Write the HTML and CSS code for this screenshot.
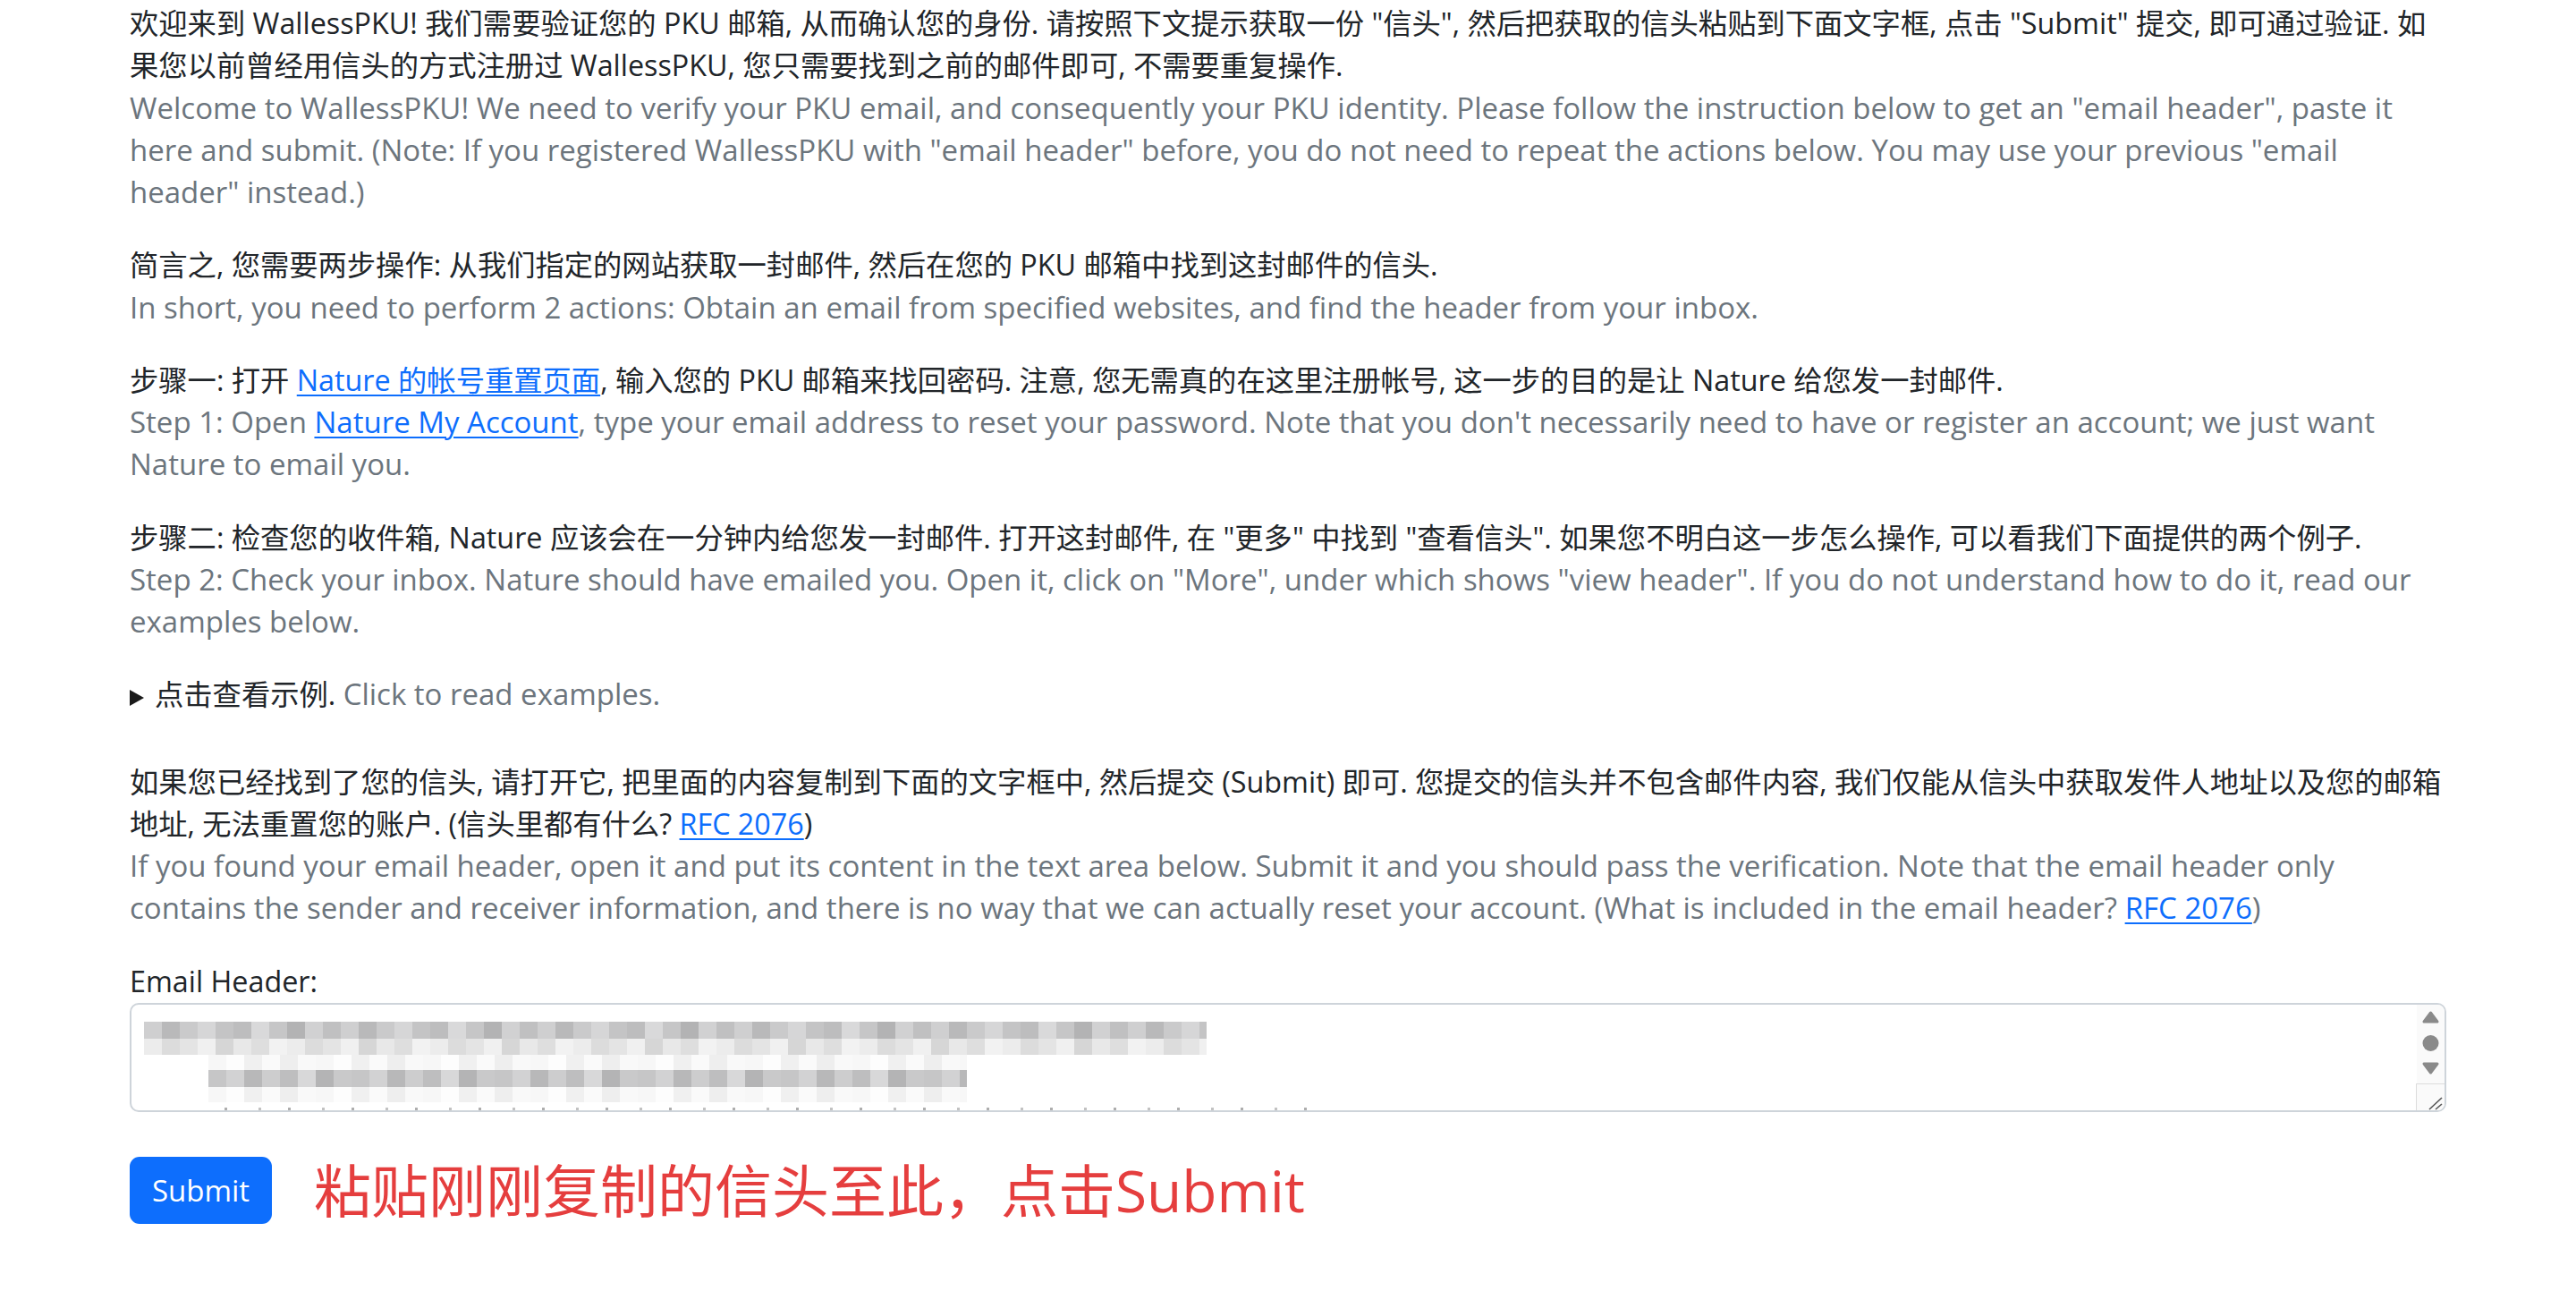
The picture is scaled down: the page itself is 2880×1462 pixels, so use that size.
FILE: index.html
```html
<!DOCTYPE html>
<html lang="zh-CN">
<head>
<meta charset="utf-8">
<title>WallessPKU - Email Header</title>
<link rel="stylesheet" href="styles.css">
</head>
<body>
<main class="page">
  <p class="para">欢迎来到 WallessPKU! 我们需要验证您的 PKU 邮箱, 从而确认您的身份. 请按照下文提示获取一份 "信头", 然后把获取的信头粘贴到下面文字框, 点击 "Submit" 提交, 即可通过验证. 如果您以前曾经用信头的方式注册过 WallessPKU, 您只需要找到之前的邮件即可, 不需要重复操作.<br><span class="muted">Welcome to WallessPKU! We need to verify your PKU email, and consequently your PKU identity. Please follow the instruction below to get an "email header", paste it here and submit. (Note: If you registered WallessPKU with "email header" before, you do not need to repeat the actions below. You may use your previous "email header" instead.)</span></p>

  <p class="para">简言之, 您需要两步操作: 从我们指定的网站获取一封邮件, 然后在您的 PKU 邮箱中找到这封邮件的信头.<br><span class="muted">In short, you need to perform 2 actions: Obtain an email from specified websites, and find the header from your inbox.</span></p>

  <p class="para">步骤一: 打开 <a class="link" href="#">Nature 的帐号重置页面</a>, 输入您的 PKU 邮箱来找回密码. 注意, 您无需真的在这里注册帐号, 这一步的目的是让 Nature 给您发一封邮件.<br><span class="muted">Step 1: Open <a class="link" href="#">Nature My Account</a>, type your email address to reset your password. Note that you don't necessarily need to have or register an account; we just want Nature to email you.</span></p>

  <p class="para">步骤二: 检查您的收件箱, Nature 应该会在一分钟内给您发一封邮件. 打开这封邮件, 在 "更多" 中找到 "查看信头". 如果您不明白这一步怎么操作, 可以看我们下面提供的两个例子.<br><span class="muted">Step 2: Check your inbox. Nature should have emailed you. Open it, click on "More", under which shows "view header". If you do not understand how to do it, read our examples below.</span></p>

  <details class="examples">
    <summary class="summary">点击查看示例. <span class="muted">Click to read examples.</span></summary>
  </details>

  <p class="para">如果您已经找到了您的信头, 请打开它, 把里面的内容复制到下面的文字框中, 然后提交 (Submit) 即可. 您提交的信头并不包含邮件内容, 我们仅能从信头中获取发件人地址以及您的邮箱地址, 无法重置您的账户. (信头里都有什么? <a class="link" href="#">RFC 2076</a>)<br><span class="muted">If you found your email header, open it and put its content in the text area below. Submit it and you should pass the verification. Note that the email header only contains the sender and receiver information, and there is no way that we can actually reset your account. (What is included in the email header? <a class="link" href="#">RFC 2076</a>)</span></p>

  <form class="form">
    <label class="label">Email Header:</label>
    <div class="textarea">
      <div class="mosaic">
        <div class="row1"><div class="band band-dark"></div><div class="band band-mid"></div></div>
        <div class="row2"><div class="band band-faint"></div><div class="band band-dark2"></div><div class="band band-faint"></div></div>
        <div class="row3"></div>
      </div>
      <div class="scrollbar">
        <svg class="sb-svg" width="31" height="118" viewBox="0 0 31 118">
          <polygon points="15.5,9 23,19 8,19" fill="#8a8a8a" stroke="#8a8a8a" stroke-width="3" stroke-linejoin="round"/>
          <circle cx="15.5" cy="43" r="9" fill="#8a8a8a"/>
          <polygon points="8,66 23,66 15.5,76" fill="#8a8a8a" stroke="#8a8a8a" stroke-width="3" stroke-linejoin="round"/>
        </svg>
        <div class="resizer">
          <svg width="31" height="30" viewBox="0 0 31 30">
            <line x1="14" y1="28" x2="28" y2="15" stroke="#555" stroke-width="1.6"/>
            <line x1="21" y1="28" x2="28" y2="22" stroke="#555" stroke-width="1.6"/>
          </svg>
        </div>
      </div>
    </div>
    <div class="actions">
      <button class="btn" type="button">Submit</button>
      <span class="hint">粘贴刚刚复制的信头至此，点击Submit</span>
    </div>
  </form>
</main>
</body>
</html>
```

FILE: styles.css
```css
html, body {
  margin: 0;
  padding: 0;
  background: #ffffff;
}

body {
  font-family: "Open Sans", "Noto Sans CJK SC", sans-serif;
  font-size: 32.3px;
  line-height: 47.25px;
  color: #212529;
}

.page {
  width: 2590px;
  padding: 2px 0 0 145px;
}

.para {
  margin: 0 0 34px 0;
}

.muted {
  color: #6c757d;
  font-size: 33px;
}

.link {
  color: #0d6efd;
  text-decoration: underline;
  text-underline-offset: 4px;
  text-decoration-thickness: 2px;
}

.examples {
  margin: 0 0 50px 0;
}

.summary {
  display: block;
  list-style: none;
  cursor: pointer;
}

.summary::-webkit-details-marker {
  display: none;
}

.summary::before {
  content: "";
  display: inline-block;
  width: 0;
  height: 0;
  border-left: 16px solid #1a1a1a;
  border-top: 9.5px solid transparent;
  border-bottom: 9.5px solid transparent;
  margin-right: 12px;
  vertical-align: -1px;
}

.form {
  display: flex;
  flex-direction: column;
}

.label {
  display: block;
  margin-bottom: 1px;
}

.textarea {
  position: relative;
  height: 118px;
  border: 2px solid #ced4da;
  border-radius: 10px;
  overflow: hidden;
  background: #fff;
}

.mosaic {
  padding: 19px 0 0 14px;
  display: flex;
  flex-direction: column;
}

.row1 {
  width: 1188px;
  display: flex;
  flex-direction: column;
}

.row2 {
  width: 848px;
  margin-left: 72px;
  display: flex;
  flex-direction: column;
}

.row3 {
  margin: 6px 0 0 90px;
  width: 1230px;
  height: 3px;
  background: repeating-linear-gradient(90deg, #777 0 3px, transparent 3px 38px, #999 38px 41px, transparent 41px 71px);
  opacity: 0.6;
}

.band { height: 19px; }

.band-dark {
  background: repeating-linear-gradient(90deg,
    #cfcfd0 0 20px, #b9b9ba 20px 40px, #cacacb 40px 60px, #d6d6d7 60px 80px,
    #c4c4c5 80px 100px, #bdbdbe 100px 120px, #d9d9da 120px 140px, #c6c6c7 140px 160px,
    #b3b3b4 160px 180px, #d1d1d2 180px 200px, #c0c0c1 200px 220px);
}

.band-mid {
  height: 18px;
  background: repeating-linear-gradient(90deg,
    #ececec 0 20px, #dcdcdc 20px 40px, #e4e4e4 40px 60px, #f0f0f0 60px 80px,
    #d6d6d6 80px 100px, #e8e8e8 100px 120px, #dedede 120px 140px, #f2f2f2 140px 160px);
}

.band-faint {
  height: 17px;
  background: repeating-linear-gradient(90deg,
    #f7f7f7 0 20px, #fdfdfd 20px 40px, #f0f0f0 40px 60px, #fafafa 60px 80px,
    #eeeeee 80px 100px, #f9f9f9 100px 120px);
}

.band-dark2 {
  background: repeating-linear-gradient(90deg,
    #c6c6c7 0 20px, #d2d2d3 20px 40px, #b8b8b9 40px 60px, #cdcdce 60px 80px,
    #bebebf 80px 100px, #d8d8d9 100px 120px, #b4b4b5 120px 140px, #c9c9ca 140px 160px);
}

.scrollbar {
  position: absolute;
  top: 0;
  right: 0;
  width: 31px;
  height: 118px;
  background: #fafafa;
}

.sb-svg {
  display: block;
}

.resizer {
  position: absolute;
  right: 0;
  bottom: 0;
  width: 31px;
  height: 29px;
  border-left: 1px solid #dcdcdc;
  border-top: 1px solid #dcdcdc;
  background: #fafafa;
}

.resizer svg {
  display: block;
}

.actions {
  display: flex;
  align-items: center;
  gap: 47px;
  margin-top: 48px;
}

.btn {
  width: 159px;
  height: 75px;
  padding: 0;
  border: none;
  border-radius: 11px;
  background: #0d6efd;
  color: #fff;
  font-family: "Open Sans", "Noto Sans CJK SC", sans-serif;
  font-size: 33px;
  cursor: pointer;
}

.hint {
  color: #e53e3e;
  font-family: "Open Sans", "Noto Sans CJK SC", sans-serif;
  font-size: 64px;
  line-height: 80px;
}
```
